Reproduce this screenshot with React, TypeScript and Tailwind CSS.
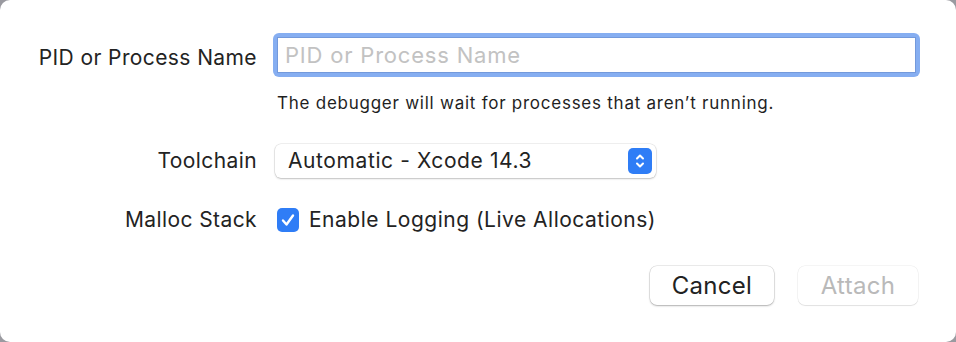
import React from "react";

const font = { fontFamily: "Inter, 'Noto Sans', sans-serif" };

function Stepper() {
  return (
    <span className="flex h-[26px] w-[24px] items-center justify-center rounded-[5px] bg-[#2f7df6]">
      <svg width="12" height="18" viewBox="0 0 12 18" fill="none">
        <path d="M3 6.5 L6 3.5 L9 6.5" stroke="white" strokeWidth="2" strokeLinecap="round" strokeLinejoin="round" />
        <path d="M3 11.5 L6 14.5 L9 11.5" stroke="white" strokeWidth="2" strokeLinecap="round" strokeLinejoin="round" />
      </svg>
    </span>
  );
}

function Check() {
  return (
    <span className="flex h-[24px] w-[22px] items-center justify-center rounded-[5px] bg-[#2f7df6]">
      <svg width="16" height="16" viewBox="0 0 16 16" fill="none">
        <path d="M3 8.5 L6.5 12.5 L13 3.5" stroke="white" strokeWidth="2.4" strokeLinecap="round" strokeLinejoin="round" />
      </svg>
    </span>
  );
}

export default function App() {
  return (
    <div className="h-[342px] w-[956px] bg-[#9a9aa0]" style={font}>
      <div className="flex h-full w-full flex-col rounded-[10px] bg-white pt-[33px] pl-[37px] pr-[36px] text-[#232323]">
        {/* PID row */}
        <div className="flex items-center">
          <div className="w-[220px] whitespace-nowrap pt-[5px] text-right text-[21px] leading-[26px] tracking-[0.4px]">
            PID or Process Name
          </div>
          <div className="ml-[16px] flex-1 rounded-[6px] bg-[#86aef1] p-[4px]">
            <div className="flex h-[36px] items-center border border-[#7399db] bg-white px-[7px] text-[22px] tracking-[0.8px] text-[#c2c2c2]">
              PID or Process Name
            </div>
          </div>
        </div>
        <div className="mt-[15px] pl-[240px] text-[17px] leading-[22px] tracking-[0.75px] text-[#1f1f1f]">
          The debugger will wait for processes that aren’t running.
        </div>

        {/* Toolchain */}
        <div className="mt-[30px] flex items-center">
          <div className="w-[220px] text-right text-[21px] tracking-[0.4px]">Toolchain</div>
          <div className="ml-[18px] flex h-[34px] w-[381px] items-center justify-between rounded-[6px] bg-white pl-[13px] pr-[4px] shadow-[0_0_0_0.5px_rgba(0,0,0,0.12),0_1px_2px_rgba(0,0,0,0.2)]">
            <span className="text-[21px] tracking-[0.6px]">Automatic - Xcode 14.3</span>
            <Stepper />
          </div>
        </div>

        {/* Malloc */}
        <div className="mt-[29px] flex h-[26px] items-center">
          <div className="w-[220px] text-right text-[21px] tracking-[0.4px]">Malloc Stack</div>
          <div className="ml-[20px] flex items-center gap-[10px]">
            <Check />
            <span className="text-[21px] tracking-[0.5px]">Enable Logging (Live Allocations)</span>
          </div>
        </div>

        {/* Buttons */}
        <div className="mt-[33px] flex justify-end gap-[24px] pr-[2px]">
          <button className="h-[39px] w-[124px] rounded-[7px] bg-white text-[24px] tracking-[0.3px] text-[#222] shadow-[0_0_0_0.5px_rgba(0,0,0,0.15),0_1px_2px_rgba(0,0,0,0.25)]">
            Cancel
          </button>
          <button className="h-[39px] w-[120px] rounded-[7px] bg-white text-[24px] tracking-[0.3px] text-[#b9b9b9] shadow-[0_0_0_0.5px_rgba(0,0,0,0.08),0_1px_1px_rgba(0,0,0,0.08)]">
            Attach
          </button>
        </div>
      </div>
    </div>
  );
}
